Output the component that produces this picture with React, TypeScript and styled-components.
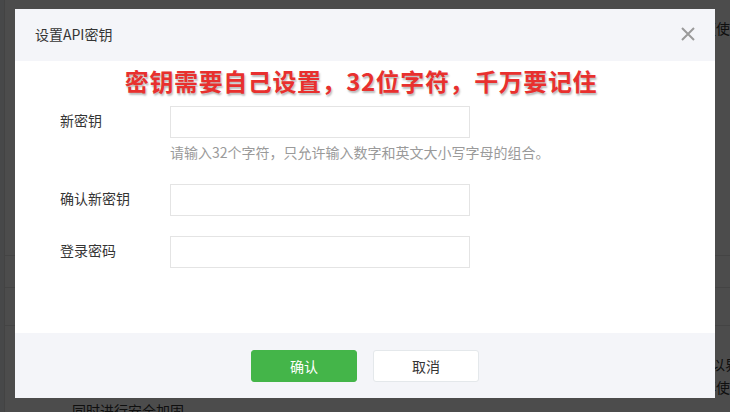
import React from "react";
import styled, { createGlobalStyle } from "styled-components";

const GlobalStyle = createGlobalStyle`
  html, body { margin: 0; padding: 0; }
  body {
    background: #eef0f3;
    overflow: hidden;
    font-family: "Noto Sans CJK SC", "Noto Sans", sans-serif;
    color: #333;
  }
  * { box-sizing: border-box; }
`;

const Page = styled.div`
  width: 730px;
  height: 412px;
  overflow: hidden;
  padding-left: 4px;
  background: #eef0f3;
`;

const Card = styled.div`
  height: 100%;
  background: #fff;
  border-left: 1px solid #e0e0e0;
  display: flex;
  flex-direction: column;
`;

const Section = styled.div<{ $h?: number; $pt?: number; $border?: boolean }>`
  flex: 0 0 auto;
  height: ${(p) => (p.$h ? `${p.$h}px` : "auto")};
  padding-top: ${(p) => p.$pt ?? 0}px;
  padding-left: 67px;
  border-top: ${(p) => (p.$border ? "1px solid #e4e4e4" : "none")};
`;

const Para = styled.p<{ $indent?: number }>`
  margin: 0;
  font-size: 14px;
  line-height: 23px;
  white-space: nowrap;
  color: #333;
  text-indent: ${(p) => p.$indent ?? 0}px;
`;

const Overlay = styled.div`
  position: fixed;
  inset: 0;
  background: rgba(0, 0, 0, 0.7);
  display: flex;
  justify-content: center;
  align-items: flex-start;
  padding-top: 9px;
`;

const Modal = styled.div`
  width: 700px;
  background: #fff;
  display: flex;
  flex-direction: column;
`;

const Header = styled.div`
  height: 52px;
  background: #f4f5f9;
  display: flex;
  align-items: center;
  justify-content: space-between;
  padding: 0 20px 2px 20px;
`;

const Title = styled.h3`
  margin: 0;
  font-size: 14px;
  font-weight: 400;
  line-height: 20px;
  color: #353535;
`;

const CloseButton = styled.button`
  border: none;
  background: transparent;
  padding: 0;
  width: 14px;
  height: 14px;
  display: flex;
  align-items: center;
  justify-content: center;
  cursor: pointer;
`;

const Body = styled.div`
  height: 272px;
  padding: 0 0 0 45px;
  display: flex;
  flex-direction: column;
`;

const Banner = styled.div`
  margin-left: -45px;
  height: 40px;
  line-height: 40px;
  margin-bottom: 5px;
  text-align: center;
  padding-right: 8px;
  font-size: 24px;
  letter-spacing: 0.6px;
  font-weight: 700;
  color: #e8302e;
  text-shadow: 1px 2px 2px rgba(0, 0, 0, 0.28);
  white-space: nowrap;
`;

const FormRow = styled.div<{ $mt?: number }>`
  display: flex;
  margin-top: ${(p) => p.$mt ?? 0}px;
`;

const Label = styled.label`
  width: 110px;
  flex: 0 0 110px;
  height: 32px;
  line-height: 29px;
  font-size: 14px;
  color: #353535;
`;

const Field = styled.div`
  display: flex;
  flex-direction: column;
`;

const Input = styled.input`
  width: 300px;
  height: 32px;
  border: 1px solid #e4e4e4;
  background: #fff;
  outline: none;
  padding: 0 10px;
  font-size: 14px;
  font-family: inherit;
`;

const Hint = styled.p`
  margin: 4px 0 0 0;
  font-size: 14px;
  line-height: 20px;
  color: #9a9a9a;
  white-space: nowrap;
`;

const Footer = styled.div`
  height: 65px;
  background: #f4f5f9;
  display: flex;
  justify-content: center;
  align-items: flex-start;
  padding-top: 17px;
  gap: 16px;
`;

const Button = styled.button<{ $primary?: boolean }>`
  width: 106px;
  height: 32px;
  border-radius: 3px;
  font-family: inherit;
  font-size: 14px;
  line-height: 29px;
  padding: 0;
  cursor: pointer;
  border: 1px solid ${(p) => (p.$primary ? "#44b549" : "#e4e8eb")};
  background: ${(p) => (p.$primary ? "#44b549" : "#fff")};
  color: ${(p) => (p.$primary ? "#fff" : "#353535")};
`;

const CloseIcon = () => (
  <svg width="14" height="14" viewBox="0 0 14 14">
    <path d="M1 1 L13 13 M13 1 L1 13" stroke="#9a9a9a" strokeWidth="2" strokeLinecap="butt" />
  </svg>
);

export default function App() {
  return (
    <>
      <GlobalStyle />
      <Page>
        <Card>
          <Section $h={255} $pt={17}>
            <Para>请妥善保管您的密钥，切勿泄露给他人，如发现密钥存在泄露风险，请及时重新设置新的密钥，以便于更使用方便</Para>
          </Section>
          <Section $h={32} $border />
          <Section $h={38} $border />
          <Section $pt={27} $border>
            <Para $indent={-5}>商户可通过接口调用平台提供的各项服务能力，接口请求均需使用密钥进行签名，签名规则及参数说明请以界面展示为准</Para>
            <Para>为提升账户安全性，建议定期更换密钥，新密钥设置成功后原密钥将立即失效，请及时更新系统配置后再使用，</Para>
            <Para>同时进行安全加固。</Para>
          </Section>
        </Card>
      </Page>
      <Overlay>
        <Modal>
          <Header>
            <Title>设置API密钥</Title>
            <CloseButton aria-label="关闭">
              <CloseIcon />
            </CloseButton>
          </Header>
          <Body>
            <Banner>密钥需要自己设置，32位字符，千万要记住</Banner>
            <FormRow>
              <Label>新密钥</Label>
              <Field>
                <Input type="text" />
                <Hint>请输入32个字符，只允许输入数字和英文大小写字母的组合。</Hint>
              </Field>
            </FormRow>
            <FormRow $mt={22}>
              <Label>确认新密钥</Label>
              <Field>
                <Input type="text" />
              </Field>
            </FormRow>
            <FormRow $mt={20}>
              <Label>登录密码</Label>
              <Field>
                <Input type="password" />
              </Field>
            </FormRow>
          </Body>
          <Footer>
            <Button $primary>确认</Button>
            <Button>取消</Button>
          </Footer>
        </Modal>
      </Overlay>
    </>
  );
}
